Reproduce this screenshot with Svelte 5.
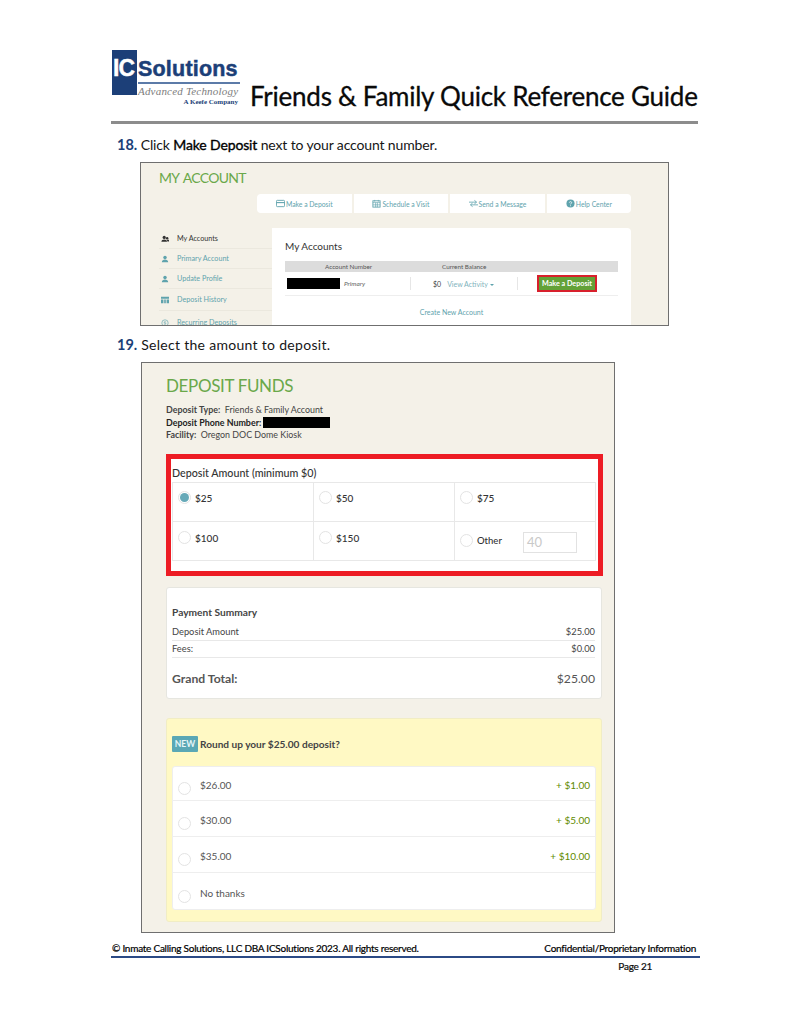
<script>
  const tabs = [
    { label: 'Make a Deposit', icon: 'card' },
    { label: 'Schedule a Visit', icon: 'cal' },
    { label: 'Send a Message', icon: 'swap' },
    { label: 'Help Center', icon: 'help' }
  ];
  const side = [
    { label: 'My Accounts', icon: 'users', active: true },
    { label: 'Primary Account', icon: 'user' },
    { label: 'Update Profile', icon: 'user' },
    { label: 'Deposit History', icon: 'bank' },
    { label: 'Recurring Deposits', icon: 'cycle' }
  ];
  const amounts = [
    { label: '$25', on: true }, { label: '$50' }, { label: '$75' },
    { label: '$100' }, { label: '$150' }, { label: 'Other', other: true }
  ];
  const rounds = [
    { v: '$26.00', p: '+ $1.00' },
    { v: '$30.00', p: '+ $5.00' },
    { v: '$35.00', p: '+ $10.00' },
    { v: 'No thanks', p: '' }
  ];
</script>

<div class="page">
  <header class="head">
    <div class="logo">
      <div class="logo-square"><span class="ic">IC</span></div>
      <div class="logo-text">
        <div class="sol">Solutions</div>
        <div class="adv">Advanced Technology</div>
        <div class="keefe">A Keefe Company</div>
      </div>
    </div>
    <h1>Friends &amp; Family Quick Reference Guide</h1>
  </header>
  <div class="rule"></div>

  <p class="step s1"><b class="num">18.</b> Click <span class="strong">Make Deposit</span> next to your account number.</p>

  <section class="shot one">
    <div class="my-title">MY ACCOUNT</div>
    <nav class="tabs">
      {#each tabs as t}
        <div class="tab">
          <svg viewBox="0 0 10 10" class="ti">
            {#if t.icon === 'card'}
              <rect x="0.5" y="1.5" width="9" height="7" rx="1" fill="none" stroke="currentColor"/><path d="M0.5 4h9" stroke="currentColor" stroke-width="1.2"/>
            {:else if t.icon === 'cal'}
              <rect x="1" y="2" width="8" height="7" fill="none" stroke="currentColor"/><path d="M1 4h8M3 1v2M7 1v2M4 4v5M6 4v5M1 6.500h8" stroke="currentColor" stroke-width="0.7"/>
            {:else if t.icon === 'swap'}
              <path d="M0 3.500h8M6 1.500l2.500 2-2.500 2M10 6.500h-8M4 4.500l-2.500 2 2.500 2" fill="none" stroke="currentColor" stroke-width="0.9"/>
            {:else}
              <circle cx="5" cy="5" r="4.500" fill="currentColor"/><path d="M3.700 4c.2-1.500 2.700-1.300 2.600 0 0 1-1.300 1-1.300 2M5 7v1" fill="none" stroke="#fff" stroke-width="0.9"/>
            {/if}
          </svg>{t.label}
        </div>
      {/each}
    </nav>
    <div class="acct">
      <aside class="side">
        {#each side as s}
          <div class="side-row" class:active={s.active}>
            <svg viewBox="0 0 10 10" class="si">
              {#if s.icon === 'users'}
                <circle cx="4" cy="3" r="2" fill="currentColor"/><path d="M0.500 8.500c0-4 7-4 7 0z" fill="currentColor"/><circle cx="7.700" cy="4" r="1.500" fill="currentColor"/><path d="M7 6h3v2H8z" fill="currentColor"/>
              {:else if s.icon === 'user'}
                <circle cx="5" cy="3" r="2.200" fill="currentColor"/><path d="M1 9c0-4.500 8-4.500 8 0z" fill="currentColor"/>
              {:else if s.icon === 'bank'}
                <path d="M0 1h10v2.500H0zM0 4.500h3V9H0zM4 4.500h2V9H4zM7 4.500h3V9H7z" fill="currentColor"/>
              {:else}
                <circle cx="5" cy="5" r="4" fill="none" stroke="currentColor" stroke-width="0.8"/><path d="M6.500 3.500H4v1.500h2v1.500H3.500" fill="none" stroke="currentColor" stroke-width="0.7"/>
              {/if}
            </svg>
            <span>{s.label}</span>
          </div>
        {/each}
      </aside>
      <div class="panel">
        <h2>My Accounts</h2>
        <div class="thead"><span class="th1">Account Number</span><span class="th2">Current Balance</span></div>
        <div class="trow">
          <div class="redact small"></div>
          <em class="prim">Primary</em>
          <div class="bal"><span class="zero">$0</span><span class="va">View Activity<i class="caret"></i></span></div>
          <div class="act"><button class="dep">Make a Deposit</button></div>
        </div>
        <div class="create">Create New Account</div>
      </div>
    </div>
  </section>

  <p class="step s2"><b class="num">19.</b> Select the amount to deposit.</p>

  <section class="shot two">
    <div class="dep-title">DEPOSIT FUNDS</div>
    <div class="info">
      <div><b>Deposit Type:</b>&nbsp; Friends &amp; Family Account</div>
      <div class="ph"><b class="dark">Deposit Phone Number:</b> <span class="redact big"></span></div>
      <div><b>Facility:</b>&nbsp; Oregon DOC Dome Kiosk</div>
    </div>

    <div class="redbox">
      <div class="amt-title">Deposit Amount (minimum $0)</div>
      <div class="grid">
        {#each amounts as a}
          <div class="cell" class:other={a.other}>
            <span class="radio" class:on={a.on}></span>
            <span class="cell-l">{a.label}</span>
            {#if a.other}<span class="inp">40</span>{/if}
          </div>
        {/each}
      </div>
    </div>

    <div class="summary">
      <div class="sum-title">Payment Summary</div>
      <div class="sum-row"><span>Deposit Amount</span><span>$25.00</span></div>
      <div class="sum-row"><span>Fees:</span><span>$0.00</span></div>
      <div class="grand"><b>Grand Total:</b><span>$25.00</span></div>
    </div>

    <div class="yellow">
      <div class="y-head"><span class="badge">NEW</span><span>Round up your $25.00 deposit?</span></div>
      <div class="y-list">
        {#each rounds as r}
          <div class="y-row">
            <span class="radio low"></span>
            <span class="y-v">{r.v}</span>
            <span class="y-p">{r.p}</span>
          </div>
        {/each}
      </div>
    </div>
  </section>

  <footer>
    <div class="foot1"><span>© Inmate Calling Solutions, LLC DBA ICSolutions 2023. All rights reserved.</span><span>Confidential/Proprietary Information</span></div>
    <div class="foot2">Page 21</div>
  </footer>
</div>

<style>
  :global(body) { margin: 0; background: #fff; }
  .page { width: 791px; height: 1024px; box-sizing: border-box; padding: 50px 93px 0 111px; font-family: Lato, "Open Sans", sans-serif; color: #111; overflow: hidden; }

  .head { display: flex; align-items: flex-start; height: 70px; }
  .logo { display: flex; width: 128px; height: 58px; margin-left: 1px; flex: none; }
  .logo-square { width: 25px; height: 45px; background: #1c3f78; flex: none; }
  .ic { display: block; margin-top: 6px; padding-left: 1px; color: #fff; font: 700 23px/24px "Liberation Sans", sans-serif; letter-spacing: -1px; white-space: nowrap; -webkit-text-stroke: 0.4px #fff; }
  .logo-text { flex: 1; min-width: 0; padding-left: 1px; }
  .sol { color: #1c3f78; font: 700 21.500px/26px "Liberation Sans", sans-serif; margin-top: 6px; border-bottom: 2px solid #5c7ba8; height: 26px; letter-spacing: 0.2px; -webkit-text-stroke: 0.5px #1c3f78; }
  .adv { color: #7d7d7d; font: italic 11px/13px "Liberation Serif", serif; white-space: nowrap; margin-top: 1px; letter-spacing: 0.2px; }
  .keefe { color: #1c3f78; font: 700 7px/9px "Liberation Serif", serif; text-align: right; padding-right: 2px; white-space: nowrap; }
  h1 { margin: 28px 0 0 10px; font: 400 26px/36px Lato, sans-serif; letter-spacing: -0.24px; color: #0a0a0a; white-space: nowrap; -webkit-text-stroke: 0.3px #0a0a0a; }
  .rule { height: 3px; background: #8c8c8c; margin-top: 1px; width: 587px; }

  .step { margin: 11px 0 0 6px; font: 400 14px/19px Lato, sans-serif; color: #161616; }
  .s1 { letter-spacing: -0.14px; }
  .s2 { margin-top: 9px; letter-spacing: 0.3px; }
  .num { color: #1c3f78; font-weight: 700; font-size: 14.500px; letter-spacing: 0; }
  .strong { font-weight: 400; color: #000; -webkit-text-stroke: 0.35px #000; }

  .shot { box-sizing: border-box; background: #f4f1e8; border: 1.500px solid #6f6f6f; }
  .one { width: 529px; height: 164px; margin: 8px 0 0 29px; padding: 5px 37px 0 18px; overflow: hidden; }
  .my-title { font-size: 14px; letter-spacing: -0.7px; word-spacing: 1.500px; line-height: 19px; color: #6aa84a; }
  .tabs { display: flex; gap: 2px; margin: 7px 0 0 98px; height: 19px; }
  .tab { flex: 1; background: #fff; display: flex; align-items: center; justify-content: center; color: #5fa3ad; font-size: 6.800px; }
  .tab:first-child { border-radius: 4px 0 0 4px; }
  .tab:last-child { border-radius: 0 4px 4px 0; flex: 0.89; }
  .ti { width: 9px; height: 9px; margin-right: 1px; }
  .acct { display: flex; margin-top: 15px; }
  .side { width: 113px; flex: none; padding-top: 1px; }
  .side-row { display: flex; align-items: center; height: 20px; border-bottom: 1px solid #ebe8de; box-sizing: border-box; color: #5fa3ad; font-size: 7.200px; }
  .side-row:nth-child(4) { height: 22px; }
  .side-row:nth-child(5) { height: 24px; }
  .side-row.active { color: #333; }
  .si { width: 8px; height: 8px; margin: 0 8px 0 2px; flex: none; }
  .panel { flex: 1; height: 110px; background: #fff; border-radius: 0 4px 0 0; padding: 0 13px; }
  h2 { margin: 11px 0 0; font-size: 10px; line-height: 14px; font-weight: 400; color: #333; }
  .thead { background: #dcdcdc; height: 11px; margin-top: 8px; display: flex; font-size: 6.300px; line-height: 11px; color: #555; }
  .th1 { margin-left: 40px; width: 117px; }
  .trow { display: flex; align-items: center; height: 23px; border-bottom: 1px solid #eee; }
  .redact { background: #000; display: inline-block; }
  .small { width: 53px; height: 11px; margin-left: 2px; }
  .prim { font-size: 6.500px; color: #666; margin-left: 4px; width: 66px; }
  .bal { width: 106px; height: 13px; border-left: 1px solid #e6e6e6; border-right: 1px solid #e6e6e6; display: flex; align-items: center; font-size: 7px; }
  .zero { margin-left: 22px; color: #444; }
  .va { margin-left: 6px; color: #7fb3bc; white-space: nowrap; }
  .caret { display: inline-block; border: 2px solid transparent; border-top: 2px solid #5fa3ad; margin-left: 2px; vertical-align: -1px; }
  .act { margin-left: 19px; }
  .dep { display: block; width: 60px; height: 17px; box-sizing: border-box; padding: 0; border: 2px solid #d8202c; background: #63a137; color: #fff; font: 700 7.200px Lato, sans-serif; white-space: nowrap; }
  .create { text-align: center; color: #5fa3ad; font-size: 7px; line-height: 10px; margin-top: 11px; }

  .two { width: 474px; height: 571px; margin: 8px 0 0 30px; padding: 11px 12px 0 24px; }
  .dep-title { color: #6aa84a; font-size: 17px; letter-spacing: -0.35px; line-height: 23px; }
  .info { margin-top: 7px; font-size: 8.900px; line-height: 12.500px; color: #444; }
  .info b { color: #444; font-weight: 700; }
  .info b.dark { color: #222; }
  .ph { display: flex; align-items: center; gap: 2px; }
  .big { width: 67px; height: 11px; }
  .redbox { margin-top: 12.500px; background: #fff; border: 5px solid #ed1c24; box-sizing: border-box; width: 437px; height: 122px; padding: 6px 2px 0 1px; }
  .amt-title { font-size: 10.700px; line-height: 16px; color: #333; font-weight: 500; }
  .grid { display: grid; grid-template-columns: repeat(3, 141px); grid-auto-rows: 39px; border: 1px solid #e8e8e8; border-width: 1px 1px 0 0; box-sizing: border-box; width: 424px; margin-top: 1px; }
  .cell { display: flex; align-items: flex-start; box-sizing: border-box; border: 1px solid #e8e8e8; border-width: 0 0 1px 1px; padding: 9px 0 0 5px; font-size: 10px; color: #333; }
  .cell:nth-child(-n+3) { padding-top: 8px; }
  .other { padding-top: 12px; }
  .radio { width: 13px; height: 13px; border-radius: 50%; border: 1px solid #e3e3e3; background: #fff; box-sizing: border-box; flex: none; margin-right: 4px; }
  .radio.on::after { content: ""; display: block; width: 9px; height: 9px; margin: 1px; border-radius: 50%; background: #66a9b8; }
  .cell-l { line-height: 14px; font-weight: 500; }
  .other .cell-l { font-size: 9.500px; }
  .inp { display: block; margin: -2px 0 0 21px; width: 54px; height: 21px; box-sizing: border-box; border: 1px solid #e2e2e2; color: #c9c9c9; font-size: 13px; line-height: 19px; padding-left: 3px; }
  .summary { margin-top: 11px; width: 436px; height: 112px; box-sizing: border-box; background: #fff; border: 1px solid #e6e6e0; border-radius: 3px; padding: 17px 6px 0 5px; }
  .sum-title { font-size: 10.200px; line-height: 14px; font-weight: 700; color: #444; }
  .sum-row { display: flex; justify-content: space-between; font-size: 9.300px; line-height: 16px; color: #444; border-bottom: 1px solid #e8e8e8; height: 17px; box-sizing: border-box; }
  .sum-title + .sum-row { margin-top: 5px; }
  .grand { display: flex; justify-content: space-between; align-items: center; margin-top: 12px; font-size: 12.200px; line-height: 17px; color: #555; }
  .grand b { font-weight: 700; }
  .yellow { margin-top: 19px; width: 436px; height: 204px; box-sizing: border-box; background: #fff9c4; border: 1px solid #f1edc4; border-radius: 3px; padding: 17px 5px 0 5px; }
  .y-head { display: flex; align-items: center; gap: 2px; font-size: 10.100px; font-weight: 700; color: #444; height: 16px; }
  .badge { width: 26px; height: 16px; background: #5aa8b5; color: #e6f6f8; font-size: 8.500px; line-height: 16px; text-align: center; font-weight: 700; border-radius: 1px; }
  .y-list { margin-top: 14px; background: #fff; border: 1px solid #eee; border-radius: 3px; height: 144px; box-sizing: border-box; }
  .y-row { display: flex; align-items: center; height: 36px; border-bottom: 1px solid #eee; box-sizing: border-box; padding: 0 5px 0 5px; font-size: 10px; color: #555; }
  .y-row:first-child { height: 34px; }
  .y-row:last-child { border-bottom: 0; }
  .low { margin-top: 10px; margin-right: 9px; }
  .y-v { margin-top: 3px; }
  .y-p { margin-left: auto; margin-top: 3px; color: #5f8a00; }

  footer { margin-top: 7px; }
  .foot1 { display: flex; justify-content: space-between; width: 589px; box-sizing: border-box; padding: 0 4px 0 1px; border-bottom: 2px solid #2b4a85; font: 400 10px/16px Lato, sans-serif; letter-spacing: -0.25px; color: #000; -webkit-text-stroke: 0.2px #000; }
  .foot2 { text-align: right; width: 541px; font: 400 10px/16px Lato, sans-serif; letter-spacing: -0.25px; -webkit-text-stroke: 0.2px #000; }
</style>
